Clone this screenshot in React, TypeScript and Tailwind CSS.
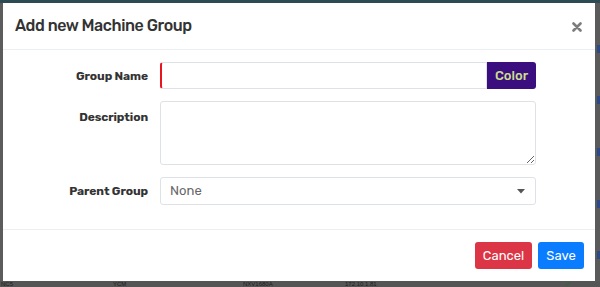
import React from "react";

const font = { fontFamily: "Rubik, Inter, 'Noto Sans', sans-serif" };

const Label = ({ children, top = false }: { children: React.ReactNode; top?: boolean }) => (
  <div
    className={`w-[145px] shrink-0 text-right text-[12px] font-bold tracking-[-0.1px] text-[#333] ${
      top ? "self-start pt-[7px]" : "self-center"
    }`}
  >
    {children}
  </div>
);

const App = () => {
  return (
    <div className="w-[600px] h-[287px] overflow-hidden bg-[#4d4d4d] flex flex-col" style={font}>
      <div className="h-[3px] bg-[#2c4b52] shrink-0" />
      <div className="flex h-[278px] shrink-0">
        <div className="w-[3px] bg-[#5c5c5c] shrink-0" />
        <div className="w-[592px] bg-white flex flex-col shrink-0">
          {/* header */}
          <div className="h-[47px] flex items-center justify-between pl-[12px] pr-[12px] border-b border-[#eceff1]">
            <h5 className="text-[16px] font-medium text-[#333] tracking-[-0.4px]">Add new Machine Group</h5>
            <svg width="10" height="10" viewBox="0 0 10 10" className="mt-[1px] mr-[1px]">
              <path d="M1.5 1.5 L8.5 8.5 M8.5 1.5 L1.5 8.5" stroke="#7d7d7d" strokeWidth="2.6" strokeLinecap="round" />
            </svg>
          </div>

          {/* body */}
          <div className="flex flex-col gap-[12px] pt-[12px] h-[180px] border-b border-[#eceff1]">
            <div className="flex gap-[12px]">
              <Label>Group Name</Label>
              <div className="flex w-[376px] h-[27px]">
                <input
                  className="flex-1 border border-[#dee2e6] border-l-2 border-l-[#e8141f] rounded-l-[3px] outline-none px-[10px] text-[13px]"
                  type="text"
                />
                <button className="w-[49px] bg-[#3b0e80] text-[#c9df8e] text-[13px] font-medium rounded-r-[3px]">
                  Color
                </button>
              </div>
            </div>
            <div className="flex gap-[12px]">
              <Label top>Description</Label>
              <textarea className="w-[376px] h-[64px] border border-[#dee2e6] rounded-[3px] outline-none px-[10px] py-[6px] text-[13px]" />
            </div>
            <div className="flex gap-[12px]">
              <Label>Parent Group</Label>
              <div className="w-[376px] h-[28px] border border-[#dee2e6] rounded-[3px] flex items-center justify-between pl-[9px] pr-[10px]">
                <span className="text-[13px] text-[#666]">None</span>
                <svg width="8" height="5" viewBox="0 0 8 5">
                  <path d="M0 0 H8 L4 4.5 Z" fill="#555" />
                </svg>
              </div>
            </div>
          </div>

          {/* footer */}
          <div className="flex-1 flex items-center justify-end gap-[6px] pr-[11px]">
            <button className="h-[27px] w-[57px] bg-[#dc3545] text-white text-[13px] rounded-[3px]">Cancel</button>
            <button className="h-[27px] w-[46px] bg-[#0a7cff] text-white text-[13px] rounded-[3px]">Save</button>
          </div>
        </div>
        <div className="flex-1 bg-[#5a5a5a] flex flex-col justify-around items-end pt-[20px]">
          <div className="w-[3px] h-[8px] bg-[#2a4a8a]" />
          <div className="w-[3px] h-[8px] bg-[#2a4a8a]" />
          <div className="w-[3px] h-[8px] bg-[#2a4a8a]" />
          <div className="w-[3px] h-[8px] bg-[#2a4a8a]" />
          <div className="w-[3px] h-[8px] bg-[#2a4a8a]" />
        </div>
      </div>
      <div
        className="flex-1 bg-[#555] flex items-center text-[6px] leading-[6px] text-[#1e1e1e]"
        style={{ fontFamily: "'Liberation Sans', sans-serif" }}
      >
        <span className="ml-[1px] w-[112px]">NC5</span>
        <span className="w-[130px]">YCM</span>
        <span className="w-[102px]">NXV1680A</span>
        <span className="w-[220px]">172.10.1.81</span>
        <span className="text-[#2a6a2a]">✔</span>
      </div>
    </div>
  );
};

export default App;
